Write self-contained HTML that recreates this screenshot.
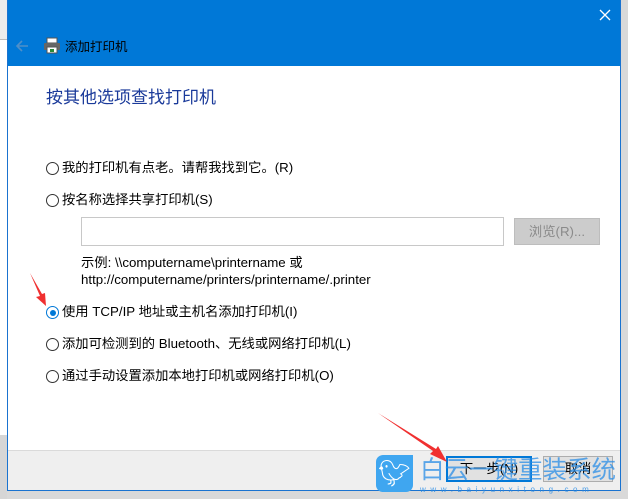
<!DOCTYPE html>
<html><head><meta charset="utf-8"><style>
*{margin:0;padding:0;box-sizing:border-box}
body{width:628px;height:499px;overflow:hidden;background:#d9d9d9;position:relative;font-family:"Liberation Sans","Noto Sans CJK SC",sans-serif;font-size:13.3px;color:#000}
.a{position:absolute}
.rad{position:absolute;width:13px;height:13px;border:1px solid #333;border-radius:50%;background:#fff}
.lbl{position:absolute;white-space:nowrap;line-height:16px}
</style></head><body>
<div class="a" style="left:0;top:0;width:7px;height:40px;background:#ececec;border-bottom:1px solid #bbb"></div>
<div class="a" style="left:0;top:40px;width:7px;height:395px;background:#fff"></div>
<div class="a" style="left:0;top:435px;width:7px;height:64px;background:#d6d6d6"></div>
<div class="a" style="left:7px;top:0;width:614px;height:491px;border:1px solid #1a73d0;background:#fff"></div>
<div class="a" style="left:8px;top:0;width:612px;height:66px;background:#0078d7"></div>
<svg class="a" style="left:599px;top:9px" width="12" height="12"><path d="M1 1L11 11M11 1L1 11" stroke="#fff" stroke-width="1.3"/></svg>
<svg class="a" style="left:14px;top:38px" width="16" height="16"><path d="M14 8H3M8 3L3 8L8 13" stroke="#4f8fc8" stroke-width="1.6" fill="none"/></svg>
<svg class="a" style="left:43px;top:37px" width="18" height="17"><rect x="4" y="1" width="10" height="5" fill="#fff" stroke="#555"/><rect x="1" y="6" width="16" height="7" rx="1" fill="#666"/><rect x="4" y="10" width="10" height="6" fill="#fff" stroke="#555"/><rect x="7" y="12" width="4" height="3" fill="#2a8a3a"/></svg>
<div class="lbl" style="left:65px;top:39px;font-size:12.5px">添加打印机</div>
<div class="lbl" style="left:46px;top:88px;font-size:17px;line-height:20px;color:#1a3a9a">按其他选项查找打印机</div>
<div class="rad" style="left:46px;top:162px"></div><div class="lbl" style="left:62px;top:160px">我的打印机有点老。请帮我找到它。(R)</div>
<div class="rad" style="left:46px;top:194px"></div><div class="lbl" style="left:62px;top:192px">按名称选择共享打印机(S)</div>
<div class="a" style="left:81px;top:217px;width:423px;height:29px;border:1px solid #c8c8c8;background:#fff"></div>
<div class="a" style="left:514px;top:218px;width:86px;height:27px;border:1px solid #bdbdbd;background:#cccccc;color:#8a8a8a;text-align:center;line-height:25px">浏览(R)...</div>
<div class="lbl" style="left:81px;top:255px">示例: \\computername\printername 或</div>
<div class="lbl" style="left:81px;top:272px">http://computername/printers/printername/.printer</div>
<div class="rad" style="left:46px;top:306px;border-color:#0078d7"><div style="position:absolute;left:2.5px;top:2.5px;width:6px;height:6px;border-radius:50%;background:#0078d7"></div></div>
<div class="lbl" style="left:62px;top:304px">使用 TCP/IP 地址或主机名添加打印机(I)</div>
<div class="rad" style="left:46px;top:338px"></div><div class="lbl" style="left:62px;top:336px">添加可检测到的 Bluetooth、无线或网络打印机(L)</div>
<div class="rad" style="left:46px;top:370px"></div><div class="lbl" style="left:62px;top:368px">通过手动设置添加本地打印机或网络打印机(O)</div>
<div class="a" style="left:8px;top:450px;width:612px;height:40px;background:#efefef;border-top:1px solid #dadada"></div>
<div class="a" style="left:446px;top:456px;width:86px;height:26px;border:2px solid #0078d7;background:#e1e1e1;text-align:center;line-height:22px">下一步(N)</div>
<div class="a" style="left:543px;top:456px;width:70px;height:26px;border:1px solid #adadad;background:#e1e1e1;text-align:center;line-height:24px">取消</div>
<div class="a" style="left:376px;top:455px;width:37px;height:37px;border-radius:7px 0 7px 7px;background:#3fa6f0;color:#fff;font-size:26px;text-align:center;line-height:37px">🐦︎</div>
<div class="lbl" style="left:420px;top:457px;font-size:24.5px;line-height:28px;color:rgba(40,140,230,.75)">白云一键重装系统</div>
<div class="lbl" style="left:420px;top:485px;font-size:8px;line-height:9px;color:rgba(40,140,230,.8);letter-spacing:4.6px">www.baiyunxitong.com</div>
<svg class="a" style="left:0;top:0" width="628" height="499"><path d="M30 273L40 296L36 297L46 306L45 293L42 294Z" fill="#f03030"/><path d="M378 413L433 451L430 454L447 462L438 446L436 449Z" fill="#f03030"/></svg>
</body></html>
